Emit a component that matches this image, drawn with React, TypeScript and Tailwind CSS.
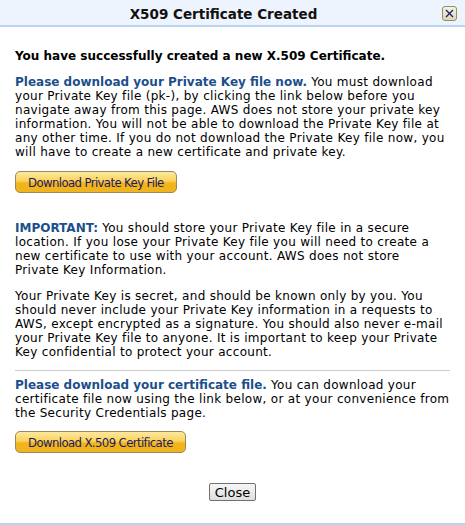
import React from "react";

const body = "[font-family:'DejaVu_Sans',Verdana,sans-serif]";

function GoldButton({ label }: { label: string }) {
  return (
    <button className="h-[22px] px-[12px] rounded-[5px] border border-[#9a8a5a] bg-[linear-gradient(to_bottom,#fde8a0_0%,#fbd35c_45%,#f2b41a_55%,#f0b420_100%)] text-[#1b1b5e] text-[13px] leading-none [font-family:'DejaVu_Sans_Condensed','DejaVu_Sans',sans-serif] tracking-[-0.6px]">
      {label}
    </button>
  );
}

export default function App() {
  return (
    <div className={`w-[465px] h-[525px] bg-white relative ${body} text-[12px] leading-[14px] text-black flex flex-col`}>
      <div className="h-[27px] pr-[18px] bg-[#eef4fd] border-b-2 border-[#b8d4ee] flex items-center justify-center relative">
        <span className="font-bold text-[13.5px] mt-[2px] [font-family:'DejaVu_Sans',Verdana,sans-serif] text-[#111]">X509 Certificate Created</span>
        <div className="absolute right-[8px] top-[6px] w-[15px] h-[15px] rounded-[3px] border border-[#8f8f70] bg-[linear-gradient(to_bottom,#f5f3e4,#dcd7b4)] flex items-center justify-center">
          <svg width="9" height="9" viewBox="0 0 9 9">
            <path d="M1 1 L8 8 M8 1 L1 8" stroke="#1a1a6e" strokeWidth="1.3" />
          </svg>
        </div>
      </div>
      <div className="px-[15px] pt-[22px] flex flex-col tracking-[0.3px]">
        <p className="font-bold tracking-normal">You have successfully created a new X.509 Certificate.</p>
        <p className="mt-[12px]">
          <span className="font-bold text-[#1c4f8c] tracking-normal">Please download your Private Key file now.</span> You must download your Private Key file (pk-), by clicking the link below before you navigate away from this page. AWS does not store your private key information. You will not be able to download the Private Key file at any other time. If you do not download the Private Key file now, you will have to create a new certificate and private key.
        </p>
        <div className="mt-[12px]">
          <GoldButton label="Download Private Key File" />
        </div>
        <p className="mt-[28px]">
          <span className="font-bold text-[#1c4f8c] tracking-normal">IMPORTANT:</span> You should store your Private Key file in a secure location. If you lose your Private Key file you will need to create a new certificate to use with your account. AWS does not store <span className="whitespace-nowrap">Private Key Information.</span>
        </p>
        <p className="mt-[12px]">
          Your Private Key is secret, and should be known only by you. You should never include your Private Key information in a requests to AWS, except encrypted as a signature. You should also never e-mail your Private Key file to anyone. It is important to keep your Private Key confidential to protect your account.
        </p>
        <div className="mt-[11px] border-t border-[#cccccc]" />
        <p className="mt-[7px]">
          <span className="font-bold text-[#1c4f8c] tracking-normal">Please download your certificate file.</span> You can download your certificate file now using the link below, or at your convenience from the Security Credentials page.
        </p>
        <div className="mt-[11px]">
          <GoldButton label="Download X.509 Certificate" />
        </div>
        <div className="mt-[30px] flex justify-center">
          <button className="h-[18px] px-[5px] rounded-[2px] border border-[#707070] bg-[linear-gradient(to_bottom,#f6f6f6,#dedede)] text-[13px] leading-none text-black tracking-normal [font-family:'DejaVu_Sans',sans-serif]">
            Close
          </button>
        </div>
      </div>
      <div className="absolute left-0 right-0 bottom-0 h-[2px] bg-[#b8d4ee]" />
    </div>
  );
}
